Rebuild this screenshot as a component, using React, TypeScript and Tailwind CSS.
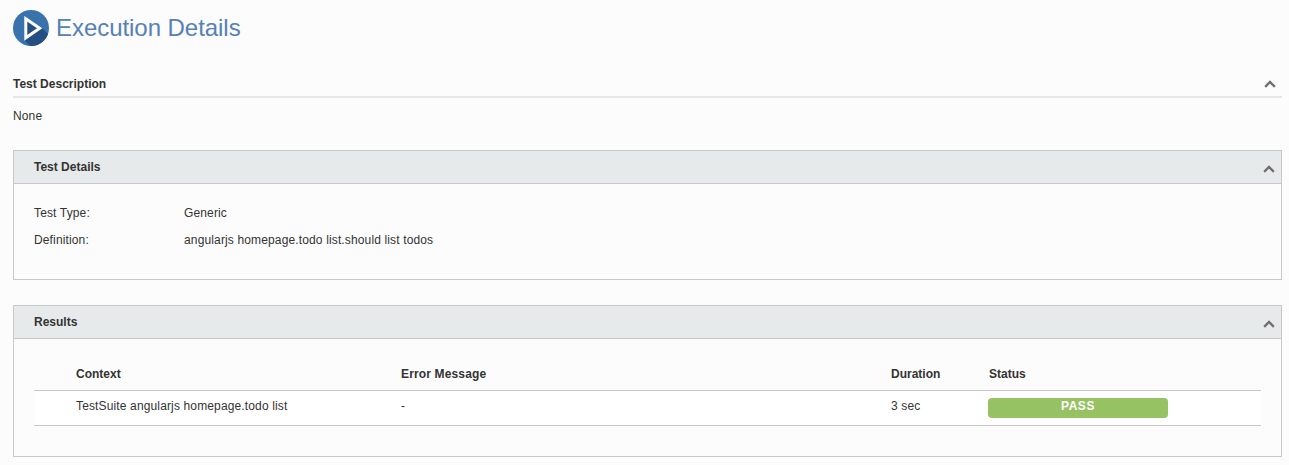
import { ChevronUp } from 'lucide-react';

function Logo() {
  return (
    <svg width="36" height="36" viewBox="0 0 36 36" className="shrink-0">
      <defs>
        <clipPath id="disc">
          <circle cx="18" cy="18" r="18" />
        </clipPath>
      </defs>
      <circle cx="18" cy="18" r="18" fill="#3a72ad" />
      <path d="M29.3 18.3 L42 31 L42 42 L23 42 L11.3 30 Z" fill="#234f82" clipPath="url(#disc)" />
      <path d="M12.8 8.8 L26.65 18.3 L12.8 27.8 Z" fill="#234f82" stroke="#ffffff" strokeWidth="3" strokeLinejoin="miter" strokeMiterlimit={6} />
    </svg>
  );
}

function Chevron() {
  return <ChevronUp className="h-4 w-4 text-[#6f6f6f]" strokeWidth={3.5} strokeLinecap="square" strokeLinejoin="miter" />;
}

function Panel({ title, children, bodyClass }: { title: string; children: React.ReactNode; bodyClass: string }) {
  return (
    <section className="border border-[#c8c8c8]">
      <div className="flex h-[33px] items-center justify-between border-b border-[#c8c8c8] bg-[#e7eaeb] pl-5 pr-1">
        <h2 className="text-xs font-bold text-[#333333]">{title}</h2>
        <div className="pt-1">
          <Chevron />
        </div>
      </div>
      <div className={bodyClass}>{children}</div>
    </section>
  );
}

export default function App() {
  return (
    <div className="h-[465px] overflow-hidden bg-[#fcfcfc] pl-[13px] pr-[7px] pt-[10px] font-['Liberation_Sans',Arial,sans-serif] text-xs text-[#333333]">
      <header className="flex items-center gap-[7px]">
        <Logo />
        <h1 className="text-[24px] leading-9 tracking-[-0.05px] text-[#5580b8]">Execution Details</h1>
      </header>

      <div className="mt-[20px] flex h-[32px] items-center justify-between border-b-2 border-[#e6e6e6] pr-1 pt-[5px]">
        <h2 className="font-bold">Test Description</h2>
        <Chevron />
      </div>
      <p className="mt-[11px] leading-[14px] tracking-[0.14px]">None</p>

      <div className="mt-[27px]">
        <Panel title="Test Details" bodyClass="h-[95px] px-5 pt-[22px]">
          <dl className="grid grid-cols-[150px_1fr] gap-y-[13px] leading-[14px] tracking-[0.14px]">
            <dt>Test Type:</dt>
            <dd>Generic</dd>
            <dt>Definition:</dt>
            <dd>angularjs homepage.todo list.should list todos</dd>
          </dl>
        </Panel>
      </div>

      <div className="mt-[25px]">
        <Panel title="Results" bodyClass="h-[117px] px-5 pt-[27px]">
          <table className="w-full table-fixed border-collapse text-left">
            <thead>
              <tr className="h-[24px] border-b border-[#c8c8c8] align-top">
                <th className="w-[42px]" />
                <th className="w-[325px] font-bold">Context</th>
                <th className="w-[490px] font-bold tracking-[0.15px]">Error Message</th>
                <th className="w-[98px] font-bold">Duration</th>
                <th className="font-bold">Status</th>
              </tr>
            </thead>
            <tbody>
              <tr className="h-[35px] border-b border-[#c8c8c8] bg-white tracking-[0.14px]">
                <td />
                <td className="pb-[3px]">TestSuite angularjs homepage.todo list</td>
                <td className="pb-[3px]">-</td>
                <td className="pb-[3px]">3 sec</td>
                <td>
                  <div className="ml-[-1px] h-[20px] w-[180px] rounded-[4px] bg-[#97c264] text-center font-bold leading-[17px] tracking-[0.5px] text-white">
                    PASS
                  </div>
                </td>
              </tr>
            </tbody>
          </table>
        </Panel>
      </div>
    </div>
  );
}
